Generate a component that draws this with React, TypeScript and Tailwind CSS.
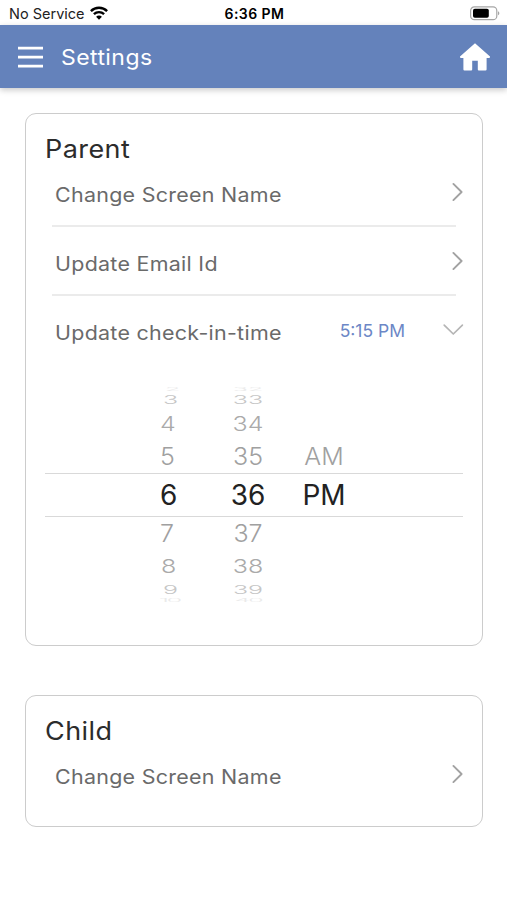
import React from "react";

function Chevron({ down = false }: { down?: boolean }) {
  return down ? (
    <svg className="h-5 w-6" viewBox="0 0 24 20" fill="none" stroke="#b5b5b5" strokeWidth="1.7" strokeLinecap="round" strokeLinejoin="round">
      <path d="M2.2 4.2 11.3 13 20.4 4.2" />
    </svg>
  ) : (
    <svg className="h-6 w-4" viewBox="0 0 16 24" fill="none" stroke="#a2a2a2" strokeWidth="1.9" strokeLinecap="round" strokeLinejoin="round">
      <path d="M3.4 3.9 11.6 12 3.4 20.1" />
    </svg>
  );
}

function Row({ label, divider = false }: { label: string; divider?: boolean }) {
  return (
    <div className="flex h-[69px] flex-col">
      <div className="flex h-[62px] justify-between pl-[29px] pr-[16px]">
        <span className="mt-[20px] h-6 origin-left scale-x-[1.1] whitespace-nowrap text-[19.5px] leading-6 tracking-[0.25px] text-[#6a6a6a]">{label}</span>
        <span className="mt-[17px] h-6"><Chevron /></span>
      </div>
      {divider && <div className="ml-[26px] mr-[26px] h-[2px] bg-[#ebebeb]" />}
    </div>
  );
}

function CardTitle({ children }: { children: string }) {
  return (
    <h2 className="flex h-[49px] pl-[19px] pt-[19px] text-[25px] leading-8 tracking-[0.4px] text-[#2c2c2c]">
      <span className="origin-left scale-x-[1.08]">{children}</span>
    </h2>
  );
}

const wheel = [
  { h: "2", m: "32", p: "", row: "h-[6px] mt-[2px] text-[#eaeaea]", text: "scale-y-[0.2]", pad: "pl-[120px]" },
  { h: "3", m: "33", p: "", row: "h-[16px] text-[#c6c6c6]", text: "scale-y-[0.48]", pad: "pl-[118px]" },
  { h: "4", m: "34", p: "", row: "h-[33px] text-[#aaaaaa]", text: "scale-y-[0.78]", pad: "pl-[115px]" },
  { h: "5", m: "35", p: "AM", row: "h-[32px] text-[#a0a0a0]", text: "scale-y-[0.95]", pad: "pl-[115px]" },
  { h: "6", m: "36", p: "PM", row: "h-[44px] border-y border-[#d9d9d9] text-[#222]", text: "text-[28px] font-normal", pad: "pl-[115px]" },
  { h: "7", m: "37", p: "", row: "h-[33px] text-[#a0a0a0]", text: "scale-y-[0.95]", pad: "pl-[115px]" },
  { h: "8", m: "38", p: "", row: "h-[33px] text-[#aaaaaa]", text: "scale-y-[0.76]", pad: "pl-[116px]" },
  { h: "9", m: "39", p: "", row: "h-[14px] text-[#c6c6c6]", text: "scale-y-[0.48]", pad: "pl-[118px]" },
  { h: "10", m: "40", p: "", row: "h-[6px] text-[#eaeaea]", text: "scale-y-[0.2] tracking-[-2px]", pad: "pl-[114px]" },
];

export default function App() {
  return (
    <div className="h-[900px] w-[507px] overflow-hidden bg-white font-['Inter',sans-serif]">
      <div className="grid h-[25px] grid-cols-3 items-center pl-[9px] pr-[7px] pt-[2px] text-black">
        <div className="flex items-center gap-[5px]">
          <span className="text-[14.5px] leading-5 text-[#222]">No Service</span>
          <svg className="mt-[-2px] h-[14px] w-[18px]" viewBox="0 0 18 14" fill="none" stroke="#000" strokeWidth="2.4">
            <path d="M.9 5.1C5.4.6 12.6.6 17.1 5.1M3.9 8.2c2.9-2.8 7.3-2.8 10.2 0" />
            <path d="M9 13.7 6.1 10.7c1.6-1.5 4.2-1.5 5.8 0Z" fill="#000" stroke="none" />
          </svg>
        </div>
        <span className="text-center text-[14px] font-semibold leading-5 tracking-[0.45px]">6:36 PM</span>
        <svg className="h-[15px] w-[31px] justify-self-end" viewBox="0 0 31 15">
          <rect x="1.6" y=".9" width="26.2" height="12.8" rx="3.8" fill="none" stroke="#a6a6a6" strokeWidth="1.2" />
          <rect x="4" y="2.8" width="15.8" height="9" rx="1.8" fill="#000" />
          <path d="M29 5.3c1.8.7 1.8 3.3 0 4Z" fill="#a6a6a6" />
        </svg>
      </div>
      <header className="flex h-[63px] items-center bg-[#6482bb] pl-[18px] pr-[16px] text-white shadow-[0_2px_6px_rgba(0,0,0,0.22)]">
        <svg className="h-[24px] w-[25px]" viewBox="0 0 25 24" stroke="white" strokeWidth="2.7">
          <path d="M0 3.2h25M0 12.2h25M0 21.2h25" />
        </svg>
        <h1 className="ml-[18px] origin-left scale-x-[1.07] text-[21.5px] leading-7 tracking-[0.4px]">Settings</h1>
        <svg className="ml-auto h-[30px] w-[32px]" viewBox="0 0 32 30" fill="white">
          <path d="M16 1.2 31 14.4Q31.5 15.7 30 16H27.6V27.4Q27.6 28.5 26.5 28.5H19.8Q18.8 28.5 18.8 27.4V18.7H13.2V27.4Q13.2 28.5 12.2 28.5H5.5Q4.4 28.5 4.4 27.4V16H2Q.5 15.7 1 14.4Z" />
        </svg>
      </header>
      <main className="flex flex-col gap-[49px] pl-[25px] pr-[24px] pt-[25px]">
        <section className="h-[533px] rounded-[11px] border-[1.5px] border-[#cccccc]">
          <CardTitle>Parent</CardTitle>
          <Row label="Change Screen Name" divider />
          <Row label="Update Email Id" divider />
          <div className="flex h-[83px] pl-[29px] pr-[16px] pt-[20px]">
            <span className="origin-left scale-x-[1.1] whitespace-nowrap text-[19.5px] leading-6 tracking-[0.25px] text-[#6a6a6a]">Update check-in-time</span>
            <span className="ml-auto mr-[37px] mt-[-2px] whitespace-nowrap text-[17.5px] leading-6 text-[#6c87c6]">5:15 PM</span>
            <Chevron down />
          </div>
          <div className="ml-[19px] mr-[19px]">
            {wheel.map((r) => (
              <div key={r.m} className={"grid grid-cols-[168px_70px_82px] items-center justify-start overflow-hidden text-[25px] font-light " + r.row}>
                <span className={"flex h-0 items-center " + r.pad + " " + r.text}>{r.h}</span>
                <span className={"flex h-0 items-center justify-center " + r.text}>{r.m}</span>
                <span className={"flex h-0 items-center justify-center " + r.text}>{r.p}</span>
              </div>
            ))}
          </div>
        </section>
        <section className="h-[132px] rounded-[11px] border-[1.5px] border-[#cccccc]">
          <CardTitle>Child</CardTitle>
          <Row label="Change Screen Name" />
        </section>
      </main>
    </div>
  );
}
